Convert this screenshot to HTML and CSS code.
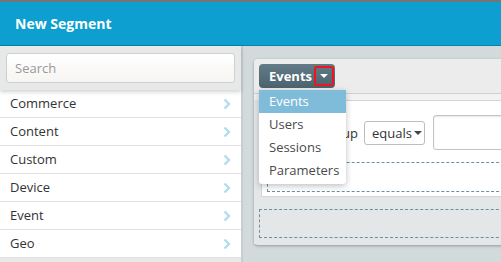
FILE: index.html
```html
<!DOCTYPE html>
<html lang="en">
<head>
  <meta charset="UTF-8">
  <title>New Segment</title>
  <link rel="stylesheet" href="styles.css">
</head>
<body>

  <div class="topline"></div>
  <div class="header">New Segment</div>

  <div class="main">
    <div class="sidebar">
      <div class="search-wrap">
        <input class="search" type="text" placeholder="Search">
      </div>
      <ul class="cat-list">
        <li>Commerce <svg class="chev" width="8" height="12" viewBox="0 0 8 12"><polyline points="1.5,1.5 6,6 1.5,10.5"/></svg></li>
        <li>Content <svg class="chev" width="8" height="12" viewBox="0 0 8 12"><polyline points="1.5,1.5 6,6 1.5,10.5"/></svg></li>
        <li>Custom <svg class="chev" width="8" height="12" viewBox="0 0 8 12"><polyline points="1.5,1.5 6,6 1.5,10.5"/></svg></li>
        <li>Device <svg class="chev" width="8" height="12" viewBox="0 0 8 12"><polyline points="1.5,1.5 6,6 1.5,10.5"/></svg></li>
        <li>Event <svg class="chev" width="8" height="12" viewBox="0 0 8 12"><polyline points="1.5,1.5 6,6 1.5,10.5"/></svg></li>
        <li>Geo <svg class="chev" width="8" height="12" viewBox="0 0 8 12"><polyline points="1.5,1.5 6,6 1.5,10.5"/></svg></li>
      </ul>
    </div>

    <div class="content">
      <div class="card">
        <div class="toolbar">
          <div class="type-btn">
            <span>Events</span>
            <span class="caret-box"><span class="caret"></span></span>
          </div>
        </div>

        <div class="card-body">
          <div class="rule-box">
            <div class="rule-row">
              <span class="rule-label">Group</span>
              <div class="select">equals<span class="caret dark"></span></div>
              <input class="value" type="text">
            </div>
            <div class="drop-zone inner"></div>
          </div>
          <div class="drop-zone outer"></div>
        </div>

        <ul class="menu">
          <li class="active">Events</li>
          <li>Users</li>
          <li>Sessions</li>
          <li>Parameters</li>
        </ul>
      </div>
    </div>
  </div>

</body>
</html>
```

FILE: styles.css
```css
body {
  margin: 0;
  font-family: "Open Sans", "Liberation Sans", sans-serif;
  background-color: #d3dadc;
  width: 501px;
  height: 262px;
  overflow: hidden;
}
.topline {
  height: 2px;
  background-color: #757575;
}
.header {
  height: 43px;
  line-height: 43px;
  padding-left: 15px;
  background-color: #0c9fd0;
  border-bottom: 1px solid #0a82ab;
  color: #fff;
  font-size: 14px;
  font-weight: bold;
}
.main {
  display: flex;
}

/* left column */
.sidebar {
  width: 241px;
  flex-shrink: 0;
  background-color: #e7e8e8;
  border-right: 2px solid #c8cdcf;
  height: 216px;
}
.search-wrap {
  padding: 7px 6px;
  position: relative;
  box-shadow: 0 2px 4px rgba(0,0,0,0.18);
}
.search {
  box-sizing: border-box;
  width: 229px;
  height: 30px;
  padding: 0 8px;
  border: 1px solid #cfcfcf;
  border-radius: 3px;
  background: linear-gradient(#ffffff, #f6f5f2);
  font-family: inherit;
  font-size: 13px;
  color: #333;
}
.search::placeholder {
  color: #999;
}
.cat-list {
  list-style: none;
  margin: 0;
  padding: 0;
  background-color: #fff;
}
.cat-list li {
  height: 27px;
  line-height: 27px;
  padding-left: 10px;
  padding-right: 10px;
  border-bottom: 1px solid #e2e2e2;
  font-size: 13px;
  color: #333;
  display: flex;
  justify-content: space-between;
  align-items: center;
}
.chev {
  fill: none;
  stroke: #b3dcec;
  stroke-width: 2.4;
}

/* right column */
.content {
  flex: 1;
  padding: 13px 0 0 11px;
}
.card {
  position: relative;
  width: 270px;
  height: 186px;
  background-color: #e3e7e8;
  border-radius: 4px;
  box-shadow: 0 1px 3px rgba(0,0,0,0.3);
}
.toolbar {
  height: 35px;
  padding: 5px;
  box-sizing: border-box;
  background-color: #ececec;
  border-bottom: 1px solid #d0d0d0;
  border-radius: 4px 4px 0 0;
}
.type-btn {
  display: inline-flex;
  align-items: center;
  height: 24px;
  padding: 0 1px 0 10px;
  background: linear-gradient(#627b87, #4b636f);
  border-radius: 4px;
  color: #fff;
  font-size: 13px;
  font-weight: bold;
}
.caret-box {
  display: inline-flex;
  justify-content: center;
  align-items: center;
  box-sizing: border-box;
  width: 20px;
  height: 20px;
  margin-left: 2px;
  border: 2px solid #f0141c;
  border-radius: 3px;
}
.caret {
  width: 0;
  height: 0;
  border-left: 4px solid transparent;
  border-right: 4px solid transparent;
  border-top: 4px solid #fff;
}
.caret.dark {
  border-top-color: #444;
  margin-left: 2px;
}
.card-body {
  background: linear-gradient(#f2f2f2 6px, #e3e7e8 6px);
  padding: 6px 0 6px 0;
}
.rule-box {
  margin-left: 7px;
  height: 95px;
  background-color: #fff;
  border: 1px solid #d5d5d5;
  border-right: none;
}
.rule-row {
  display: flex;
  align-items: center;
  height: 35px;
  margin-top: 14px;
}
.rule-label {
  font-size: 13px;
  color: #333;
  width: 96px;
  text-align: right;
}
.select {
  display: flex;
  align-items: center;
  white-space: nowrap;
  box-sizing: border-box;
  height: 24px;
  width: 61px;
  margin-left: 6px;
  padding-left: 7px;
  border: 1px solid #bdbdbd;
  border-radius: 3px;
  font-size: 13px;
  color: #333;
}
.value {
  box-sizing: border-box;
  height: 35px;
  width: 80px;
  margin-left: 8px;
  border: 1px solid #c4c4c4;
  border-radius: 3px;
  box-shadow: inset 0 1px 2px rgba(0,0,0,0.1);
}
.drop-zone {
  border: 1px dashed #6f8d9c;
  border-right: none;
}
.drop-zone.inner {
  margin: 12px 0 0 5px;
  height: 28px;
}
.drop-zone.outer {
  margin: 12px 0 0 5px;
  height: 27px;
}

/* dropdown */
.menu {
  position: absolute;
  left: 5px;
  top: 31px;
  width: 87px;
  margin: 0;
  padding: 0 0 2px 0;
  list-style: none;
  background-color: #fff;
  border-radius: 0 0 3px 3px;
  box-shadow: 0 2px 6px rgba(0,0,0,0.25);
}
.menu li {
  height: 23px;
  line-height: 23px;
  padding-left: 10px;
  font-size: 13px;
  color: #4a4a4a;
}
.menu li.active {
  background-color: #7fbcd9;
  color: #fff;
}
```
